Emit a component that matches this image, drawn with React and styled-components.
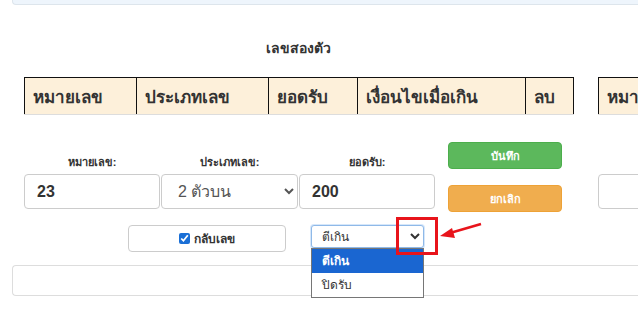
import React from 'react'
import styled, {createGlobalStyle} from 'styled-components'

const GlobalStyle = createGlobalStyle`
  html, body {
    margin: 0;
    padding: 0;
    background: #fff;
    font-family: Tahoma, "Liberation Sans", "Noto Sans", sans-serif;
    color: #333;
    overflow: hidden;
  }
`

const Page = styled.div`
  width: 638px;
  height: 323px;
  position: relative;
  overflow: hidden;
`

const TopStrip = styled.div`
  margin-left: 12px;
  height: 4px;
  background: #eef5fc;
  border: 1px solid #dde5ec;
  border-top: none;
  border-right: none;
  border-bottom-left-radius: 4px;
`

const TablesRow = styled.div`
  display: flex;
  gap: 25px;
  padding-left: 24px;
`

const TableBlock = styled.div`
  width: 549px;
  flex-shrink: 0;
`

const Title = styled.div`
  text-align: center;
  font-size: 14px;
  font-weight: bold;
  margin-top: 33px;
  height: 39px;
  line-height: 20px;
`

const Table = styled.table`
  border-collapse: collapse;
  table-layout: fixed;
  width: 549px;
`

const Th = styled.th`
  height: 36px;
  padding: 0 0 0 8px;
  text-align: left;
  font-size: 17px;
  font-weight: bold;
  background: #fdf0da;
  border-top: 1.5px solid #111;
  border-left: 1.5px solid #111;
  border-right: 1.5px solid #111;
  border-bottom: 1px solid #ddd;
  white-space: nowrap;
  overflow: hidden;
`

const FormRow = styled.div`
  display: flex;
  align-items: flex-start;
  padding-left: 24px;
  margin-top: 27px;
`

const Fields = styled.div`
  display: flex;
  gap: 1px;
  margin-top: 13px;
  flex-shrink: 0;
`

const Field = styled.div`
  display: flex;
  flex-direction: column;
  width: ${p => p.$w}px;
`

const Label = styled.label`
  text-align: center;
  font-size: 11px;
  font-weight: bold;
  height: 14px;
  line-height: 14px;
  margin-bottom: 5px;
`

const Input = styled.input`
  box-sizing: border-box;
  width: 100%;
  height: 35px;
  border: 1px solid #ccc;
  border-radius: 4px;
  padding: 0 12px;
  font-family: inherit;
  font-size: 16px;
  font-weight: bold;
  color: #333;
  background: #fff;
  outline: none;
`

const Select = styled.select`
  box-sizing: border-box;
  width: 100%;
  height: 35px;
  border: 1px solid #ccc;
  border-radius: 4px;
  padding: 0 12px;
  font-family: inherit;
  font-size: 16px;
  color: #555;
  background: #fff;
  outline: none;
`

const ButtonCol = styled.div`
  display: flex;
  flex-direction: column;
  gap: 16px;
  margin-left: 13px;
  width: 114px;
  flex-shrink: 0;
`

const Button = styled.button`
  height: 27px;
  border: 1px solid ${p => p.$border};
  border-radius: 4px;
  background: ${p => p.$bg};
  color: #fff;
  font-family: inherit;
  font-size: 11px;
  font-weight: bold;
`

const SideInput = styled(Input)`
  width: 60px;
  flex-shrink: 0;
  margin-left: 36px;
  margin-top: 32px;
`

const OptionsRow = styled.div`
  position: relative;
  display: flex;
  align-items: flex-start;
  gap: 25px;
  padding-left: 128px;
  margin-top: 13px;
`

const CheckBox = styled.label`
  box-sizing: border-box;
  width: 158px;
  height: 27px;
  border: 1px solid #ccc;
  border-radius: 4px;
  display: flex;
  align-items: center;
  justify-content: center;
  gap: 4px;
  font-size: 12px;
  font-weight: bold;
  input {
    margin: 0;
    width: 11px;
    height: 11px;
    accent-color: #1a6fd6;
  }
`

const SmallSelectWrap = styled.div`
  position: relative;
  width: 113px;
`

const SmallSelect = styled.select`
  box-sizing: border-box;
  width: 100%;
  height: 23px;
  border: 1px solid #8fb9e8;
  border-radius: 3px;
  box-shadow: 0 0 0 1px #d6e7fa;
  padding: 0 6px;
  font-family: inherit;
  font-size: 12px;
  color: #333;
  background: #fff;
  outline: none;
`

const DropList = styled.ul`
  position: absolute;
  top: 23px;
  left: 0;
  width: 100%;
  box-sizing: border-box;
  margin: 0;
  padding: 0;
  list-style: none;
  background: #fff;
  border: 1px solid #767676;
  z-index: 5;
`

const DropItem = styled.li`
  height: 24px;
  line-height: 24px;
  padding-left: 10px;
  font-size: 12px;
  font-weight: ${p => (p.$active ? 'bold' : 'normal')};
  background: ${p => (p.$active ? '#1a66d1' : '#fff')};
  color: ${p => (p.$active ? '#fff' : '#333')};
`

const Annotation = styled.svg`
  position: absolute;
  left: 0;
  top: 0;
  overflow: visible;
  pointer-events: none;
  z-index: 6;
`

const BottomBox = styled.div`
  margin-left: 12px;
  margin-top: 13px;
  height: 29px;
  border: 1px solid #ddd;
  border-right: none;
  border-radius: 4px 0 0 4px;
`

const headers = [
  ['หมายเลข', 112],
  ['ประเภทเลข', 132],
  ['ยอดรับ', 89],
  ['เงื่อนไขเมื่อเกิน', 168],
  ['ลบ', 48],
]

const BetTable = () => (
  <TableBlock>
    <Title>เลขสองตัว</Title>
    <Table>
      <colgroup>
        {headers.map(([text, w]) => (
          <col key={text} style={{width: w}} />
        ))}
      </colgroup>
      <thead>
        <tr>
          {headers.map(([text]) => (
            <Th key={text}>{text}</Th>
          ))}
        </tr>
      </thead>
    </Table>
  </TableBlock>
)

const App = () => {
  return (
    <Page>
      <GlobalStyle />
      <TopStrip />
      <TablesRow>
        <BetTable />
        <BetTable />
      </TablesRow>
      <FormRow>
        <Fields>
          <Field $w={136}>
            <Label>หมายเลข:</Label>
            <Input defaultValue="23" />
          </Field>
          <Field $w={137}>
            <Label>ประเภทเลข:</Label>
            <Select defaultValue="2top">
              <option value="2top">2 ตัวบน</option>
              <option value="2bottom">2 ตัวล่าง</option>
            </Select>
          </Field>
          <Field $w={136}>
            <Label>ยอดรับ:</Label>
            <Input defaultValue="200" />
          </Field>
        </Fields>
        <ButtonCol>
          <Button $bg="#5cb85c" $border="#4cae4c">บันทึก</Button>
          <Button $bg="#f0ad4e" $border="#eea236">ยกเลิก</Button>
        </ButtonCol>
        <SideInput />
      </FormRow>
      <OptionsRow>
        <CheckBox>
          <input type="checkbox" defaultChecked />
          กลับเลข
        </CheckBox>
        <SmallSelectWrap>
          <SmallSelect defaultValue="over">
            <option value="over">ตีเกิน</option>
            <option value="close">ปิดรับ</option>
          </SmallSelect>
          <DropList>
            <DropItem $active>ตีเกิน</DropItem>
            <DropItem>ปิดรับ</DropItem>
          </DropList>
        </SmallSelectWrap>
        <Annotation width="1" height="1">
          <rect x="397.5" y="-6.5" width="39" height="35" fill="none" stroke="#e8141b" strokeWidth="3" />
          <line x1="481" y1="-1" x2="450" y2="8" stroke="#e8141b" strokeWidth="2.5" />
          <polygon points="440,11 452,3 455,13" fill="#e8141b" />
        </Annotation>
      </OptionsRow>
      <BottomBox />
    </Page>
  )
}

export default App
